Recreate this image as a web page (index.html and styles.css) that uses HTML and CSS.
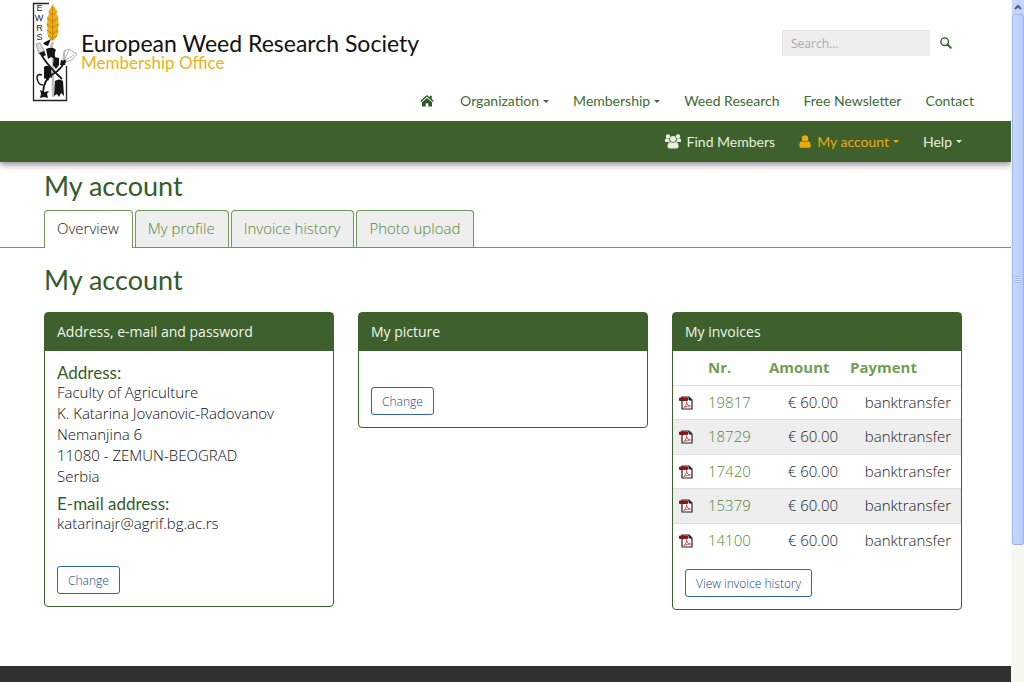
FILE: index.html
```html
<!DOCTYPE html>
<html lang="en">
<head>
<meta charset="utf-8">
<title>My account - European Weed Research Society</title>
<link rel="stylesheet" href="styles.css">
</head>
<body>
<svg width="0" height="0" class="defs" aria-hidden="true">
  <symbol id="pdf" viewBox="0 0 14 15">
    <path d="M3 2h7l3 3v9H3z" fill="#fff" stroke="#222" stroke-width="1.200"/>
    <path d="M10 2v3h3z" fill="#222" stroke="#222"/>
    <path d="M0.500 3h8v2.500h-8z" fill="#b50d12" stroke="#5e070a" stroke-width=".8"/>
    <path d="M7.500 6.500c.8 2-1 4.500-3 6M7.500 7.500c.5 2 2 3.500 4 3.500-2 0-4 .4-6 1.500" fill="none" stroke="#e2434d"/>
  </symbol>
</svg>
<div class="page">
  <header class="header">
    <div class="top">
      <a class="brand" href="#">
        <svg class="logo" viewBox="0 0 46 102" aria-hidden="true">
          <path d="M17 3.500H1.500v97h33V66" fill="none" stroke="#222" stroke-width="1.300"/>
          <g class="logo-text"><text x="7.500" y="11" text-anchor="middle">E</text><text x="7" y="21" text-anchor="middle">W</text><text x="7.500" y="30.500" text-anchor="middle">R</text><text x="7.500" y="40" text-anchor="middle">S</text></g>
          <path d="M20.500 4l2.500 4 2 3-.5 3 2 4-.5 3 1 4-1 3 .5 4-1.500 4-4.500 5-4.500-5-1-4 .5-4-1-3 1-4-.5-3 2-4-.5-3 2-3z" fill="#efae12"/>
          <path d="M20.500 7v33M17 12l3.500 3 4-3M15.500 18l5 4 5-4M15 24l5.500 4 5.500-4M15 30l5.500 4 5.500-4M16 36l4.500 3 4.500-3" fill="none" stroke="#b87c0c" stroke-width=".8"/>
          <path d="M21 42q-3 4 0 8v47" fill="none" stroke="#bdbdbd" stroke-width="2.500"/>
          <path d="M4 44l4-1 5 9-6 2z" fill="#ddd" stroke="#888" stroke-width=".7"/>
          <path d="M7 53l5-2 2 4-4 2zM11 43l8-4-3 7-3-1z" fill="#151515"/>
          <path d="M14 49q7-3 10 1l-2 4 1 5-4-2-3 2z" fill="#151515"/>
          <path d="M31 59l1-8 5-2 8 5-5 6-6 2z" fill="#fff" stroke="#999" stroke-width=".8"/>
          <path d="M32 61l1-11M32 61l5-11M32 61l10-6" stroke="#999" stroke-width=".7"/>
          <path d="M33 60q-3 9-12 14T11 92M10 56q7 11 20 23M22 51q-1 9 4 13" fill="none" stroke="#151515" stroke-width="1.800"/>
          <path d="M29 60l5 1-1 4-5 0z" fill="#151515"/>
          <path d="M12 67q3-3 7 1l1 10-2-1-2 4-3-3-1 1z" fill="#151515"/>
          <path d="M23 81q4-3 8 0l1 15-3-3-2 4-2-3-3 2z" fill="#151515"/>
          <path d="M8 90l4 2 5-1-2 3 1 4-4-1-4 1 1-4z" fill="#151515"/>
          <path d="M22 57l5 1 0 7-3 4-3-4z" fill="#151515"/>
          <path d="M10 75q-5-2-5 3 1 7 6 7" fill="none" stroke="#151515" stroke-width="1.500"/>
        </svg>
        <span class="brand-name"><span class="society">European Weed Research Society</span><span class="office">Membership Office</span></span>
      </a>
      <form class="search">
        <input type="text" placeholder="Search..." aria-label="Search">
        <button type="button" aria-label="Search"><svg viewBox="0 0 12 12" width="12" height="12"><circle cx="4.700" cy="4.700" r="3.800" fill="none" stroke="currentColor" stroke-width="1.400"/><path d="M7.500 7.500l3.300 3.300" stroke="currentColor" stroke-width="1.800" stroke-linecap="round"/></svg></button>
      </form>
    </div>
    <nav class="nav main-nav">
      <a class="home" href="#" aria-label="Home"><svg viewBox="0 0 14 12" width="14" height="12"><path d="M7 .8L.7 6.400M7 .8l6.300 5.600" fill="none" stroke="currentColor" stroke-width="1.400"/><path d="M9.800.8h2v3.500l-2-1.600zM7 3l5 4.300V11.500H8.300V8.200H5.700v3.300H2V7.300z" fill="currentColor"/></svg></a>
      <a href="#">Organization<i class="caret"></i></a>
      <a href="#">Membership<i class="caret"></i></a>
      <a href="#">Weed Research</a>
      <a href="#">Free Newsletter</a>
      <a href="#">Contact</a>
    </nav>
  </header>
  <nav class="nav member-nav">
    <a href="#"><svg viewBox="0 0 16 15" width="16" height="15" fill="currentColor"><circle cx="3" cy="2.500" r="2.200"/><circle cx="13" cy="2.500" r="2.200"/><path d="M0 8V6q0-2 2-1.500l2 .5q0 2 1 3zM16 8V6q0-2-2-1.500l-2 .5q0 2-1 3z"/><circle cx="8" cy="5" r="3"/><path d="M2.500 12.500q0-4.500 3-4.500 2.500 1.500 5 0 3 0 3 4.500 0 2-2 2h-7q-2 0-2-2z"/></svg>Find Members</a>
    <a class="active" href="#"><svg viewBox="0 0 12 13" width="12" height="13" fill="currentColor"><circle cx="6" cy="3.500" r="3.200"/><path d="M.3 11q0-4.500 2.700-4.700 3 2 6 0 2.700.2 2.700 4.700 0 1.700-1.700 1.700H2Q.3 12.700.3 11z"/></svg>My account<i class="caret"></i></a>
    <a href="#">Help<i class="caret"></i></a>
  </nav>
  <main>
    <h1 class="title">My account</h1>
    <nav class="tabs">
      <a class="tab current" href="#">Overview</a>
      <a class="tab" href="#">My profile</a>
      <a class="tab" href="#">Invoice history</a>
      <a class="tab" href="#">Photo upload</a>
    </nav>
    <h2 class="title subtitle">My account</h2>
    <div class="panels">
      <section class="panel">
        <h3>Address, e-mail and password</h3>
        <div class="panel-body">
          <h4>Address:</h4>
          <p>Faculty of Agriculture<br>K. Katarina Jovanovic-Radovanov<br>Nemanjina 6<br>11080 - ZEMUN-BEOGRAD<br>Serbia</p>
          <h4>E-mail address:</h4>
          <p>katarinajr@agrif.bg.ac.rs</p>
          <button class="btn spaced" type="button">Change</button>
        </div>
      </section>
      <section class="panel">
        <h3>My picture</h3>
        <div class="panel-body"><button class="btn picture-btn" type="button">Change</button></div>
      </section>
      <section class="panel">
        <h3>My invoices</h3>
        <table class="invoices">
          <thead><tr><th class="file"></th><th class="nr">Nr.</th><th class="amount">Amount</th><th>Payment</th></tr></thead>
          <tbody>
            <tr><td class="file"><svg><use href="#pdf"/></svg></td><td class="nr"><a href="#">19817</a></td><td class="amount">€ 60.00</td><td>banktransfer</td></tr>
            <tr><td class="file"><svg><use href="#pdf"/></svg></td><td class="nr"><a href="#">18729</a></td><td class="amount">€ 60.00</td><td>banktransfer</td></tr>
            <tr><td class="file"><svg><use href="#pdf"/></svg></td><td class="nr"><a href="#">17420</a></td><td class="amount">€ 60.00</td><td>banktransfer</td></tr>
            <tr><td class="file"><svg><use href="#pdf"/></svg></td><td class="nr"><a href="#">15379</a></td><td class="amount">€ 60.00</td><td>banktransfer</td></tr>
            <tr><td class="file"><svg><use href="#pdf"/></svg></td><td class="nr"><a href="#">14100</a></td><td class="amount">€ 60.00</td><td>banktransfer</td></tr>
          </tbody>
        </table>
        <div class="panel-foot"><button class="btn" type="button">View invoice history</button></div>
      </section>
    </div>
  </main>
  <footer class="footer"></footer>
</div>
<div class="scrollbar" aria-hidden="true">
  <div class="scroll-up"><svg viewBox="0 0 8 6" width="8" height="6"><path d="M1 5l3-3 3 3" fill="none" stroke="#4d6185" stroke-width="2"/></svg></div>
  <div class="thumb"><span class="grip"></span></div>
</div>
</body>
</html>
```
FILE: styles.css
```css
* { box-sizing: border-box; }
body {
  margin: 0;
  min-height: 100vh;
  display: grid;
  grid-template-columns: 1fr 13px;
  font: 300 15px/21px "Open Sans", sans-serif;
  color: #0c0c18;
  background: #fff;
}
a { color: inherit; text-decoration: none; }
h1, h2, h3, h4, p { margin: 0; }
.defs { position: absolute; }
.page { display: flex; flex-direction: column; min-width: 0; }

.header { height: 121px; color: #23501a; }
.top { display: flex; justify-content: space-between; height: 81px; padding: 0 53px 0 32px; }
.brand { display: flex; gap: 3px; height: 102px; }
.logo { width: 46px; height: 102px; }
.logo-text { font: 9px "Liberation Sans", sans-serif; fill: #222; }
.brand-name { display: flex; flex-direction: column; padding-top: 30px; font-family: Lato, sans-serif; font-weight: 400; }
.society { font-size: 23px; line-height: 26px; color: #111; white-space: nowrap; }
.office { font-size: 17px; line-height: 14px; color: #e6b422; }
.search { display: flex; align-items: center; gap: 4px; height: 26px; margin-top: 30px; }
.search input {
  width: 148px; height: 26px; padding: 0 8px;
  border: 1px solid #e4e4e4; border-width: 1px 0 0 1px; border-radius: 2px;
  background: #eee; font: 400 12px "Open Sans", sans-serif; color: #555;
}
.search input::placeholder { color: #aaa; }
.search button { display: flex; justify-content: center; width: 24px; padding: 0; border: 0; background: none; color: #2f5a27; }

.nav { display: flex; justify-content: flex-end; align-items: center; gap: 24px; font: 400 14px/20px Lato, sans-serif; }
.nav a { display: flex; align-items: center; white-space: nowrap; }
.nav svg { margin-right: 6px; }
.main-nav { height: 40px; padding-right: 37px; color: #3f6b36; }
.main-nav .home { color: #2f5a27; }
.main-nav .home svg { margin-right: 2px; }
.caret { margin-left: 4px; border: 3px solid transparent; border-top-color: currentColor; border-bottom: 0; }
.member-nav {
  height: 41px; padding-right: 49px;
  background: #3e602d; color: #e6efdf;
  box-shadow: 0 3px 6px rgba(60, 40, 60, .5);
  clip-path: inset(0 0 -12px 0);
}
.member-nav .active { color: #e9ac10; }

.title { padding: 6px 44px 0; font: 400 27px/36px Lato, sans-serif; color: #335c2a; }
.tabs { display: flex; gap: 2px; margin-top: 6px; padding-left: 44px; border-bottom: 1px solid #6d9a59; }
.tab {
  height: 37px; padding: 7px 13px 7px 12px;
  border: 1px solid #6d9a59; border-bottom: 0; border-radius: 4px 4px 0 0;
  background: #eee; color: #558838;
}
.tab.current { height: 38px; margin-bottom: -1px; background: #fff; color: #222; }
.subtitle { padding-top: 14px; }
.panels { display: grid; grid-template-columns: repeat(3, 1fr); align-items: start; gap: 24px; padding: 14px 49px 0 44px; }
.panel { border: 1px solid #3e602d; border-radius: 4px; }
.panel h3 { padding: 8px 12px 9px; background: #3e602d; color: #f2f6ee; font-size: 14px; font-weight: 400; line-height: 21px; }
.panel-body { padding: 12px; }
.panel h4 { font: 400 17px/19px Lato, sans-serif; color: #335c2a; }
.panel p + h4 { margin-top: 7px; }
.btn {
  height: 28px; padding: 0 10px;
  border: 1px solid #33659f; border-radius: 3px;
  background: #fff; color: #114888; font: 300 12px "Open Sans", sans-serif;
}
.spaced { display: block; margin-top: 32px; }
.picture-btn { display: block; margin-top: 24px; }
.invoices { width: 100%; border-collapse: collapse; color: #222; }
.invoices th, .invoices td { height: 34px; padding: 0; }
.invoices th { color: #6f9e54; font-weight: 700; font-size: 15px; text-align: left; }
.invoices td { border-top: 1px solid #ddd; padding-right: 10px; text-align: right; }
.invoices tbody tr:nth-child(even) { height: 35px; background: #eee; }
.invoices .file { width: 35px; padding: 0 0 0 6px; text-align: left; }
.invoices svg { display: block; width: 14px; height: 15px; }
.invoices .nr { width: 60px; padding: 0; text-align: left; }
.invoices td.nr { color: #558838; }
.invoices th.amount { width: 82px; padding-left: 1px; }
.invoices td.amount { padding-right: 12px; }
.panel-foot { padding: 12px; }
.panel-foot .btn { display: block; }
.footer { height: 16px; margin-top: auto; background: #303030; }

.scrollbar { background: #f8f8f3; padding-left: 1px; }
.scroll-up { display: flex; align-items: center; justify-content: center; height: 14px; background: #c5d5fb; }
.thumb {
  display: flex; align-items: center; justify-content: center;
  height: 531px; border: 1px solid #9db4e6; border-radius: 2px;
  background: linear-gradient(90deg, #c9d8fd, #b7caf7);
}
.grip { width: 6px; height: 7px; background: repeating-linear-gradient(#9db4e6 0 1px, #dfe8ff 1px 2px); }
```
